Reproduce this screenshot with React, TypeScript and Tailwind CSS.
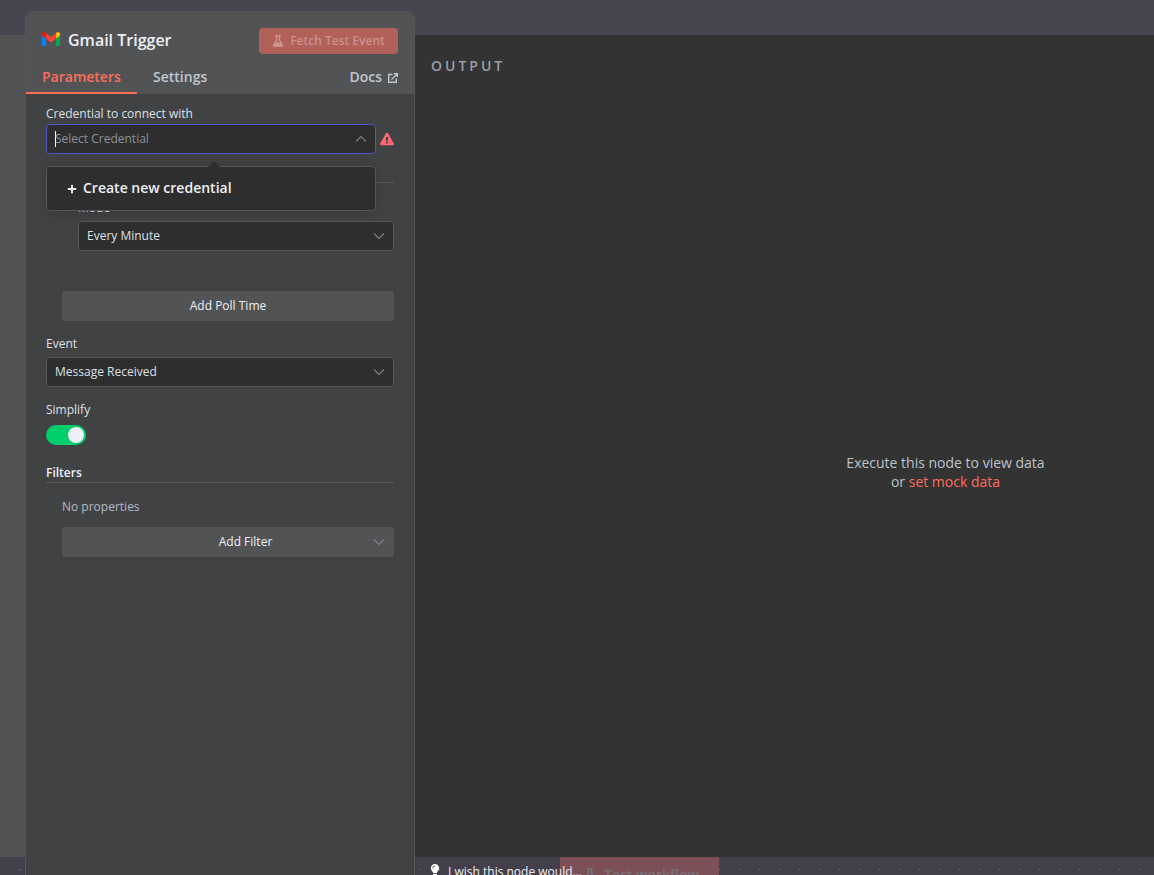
import React from "react";
import { FaFlask, FaExclamationTriangle, FaPlus, FaLightbulb } from "react-icons/fa";

function Chevron({ up = false }: { up?: boolean }) {
  return (
    <svg width="12" height="8" viewBox="0 0 12 8" fill="none" stroke="#7f8187" strokeWidth="1.1" className="shrink-0">
      <path d={up ? "M1 6.5 6 1.5 11 6.5" : "M1 1.5 6 6.5 11 1.5"} />
    </svg>
  );
}

function GmailLogo() {
  return (
    <svg width="18" height="14" viewBox="0 0 88 66" preserveAspectRatio="none" className="mb-0.5 shrink-0">
      <path fill="#0085f7" d="M6 66h14V32L0 17v43c0 3.300 2.700 6 6 6" />
      <path fill="#00a94b" d="M68 66h14c3.300 0 6-2.700 6-6V17L68 32" />
      <path fill="#ffbc00" d="M68 6v26l20-15V9c0-7.400-8.500-11.700-14.400-7.200" />
      <path fill="#ff4131" d="M20 32V6l24 18L68 6v26L44 50" />
      <path fill="#e51c19" d="M0 9v8l20 15V6l-5.600-4.200C8.500-2.700 0 1.600 0 9" />
    </svg>
  );
}

function Select({ value }: { value: string }) {
  return (
    <div className="flex h-[30px] items-center justify-between rounded border border-[#555658] bg-[#2e2e2e] pr-2 pl-2 text-[#dde0e6]">
      <span>{value}</span>
      <Chevron />
    </div>
  );
}

function Dots() {
  return (
    <svg width="100%" height="18" className="block">
      <defs>
        <pattern id="dots" width="20" height="20" patternUnits="userSpaceOnUse" x="4" y="-3">
          <rect x="0" y="15" width="1" height="1" fill="#74737f" />
        </pattern>
      </defs>
      <rect width="100%" height="18" fill="url(#dots)" />
    </svg>
  );
}

export default function App() {
  return (
    <div className="flex h-[875px] w-[1154px] overflow-hidden bg-[#464550] font-['Open_Sans',sans-serif] text-xs">
      <div className="flex w-[25px] shrink-0 flex-col">
        <div className="h-[35px]" />
        <div className="h-[822px] bg-[#525355]" />
        <div className="h-[18px] bg-[#433f4b]">
          <svg width="25" height="18">
            <rect x="19" y="12" width="1" height="1" fill="#8b8994" />
          </svg>
        </div>
      </div>

      <section className="mt-[11px] flex h-[864px] w-[390px] shrink-0 flex-col rounded-t-lg border-x border-[#555658] bg-[#414244]">
        <header className="flex h-[83px] shrink-0 flex-col rounded-t-lg bg-[#525355]">
          <div className="flex h-[57px] items-center pt-px pr-4 pl-4">
            <GmailLogo />
            <h1 className="ml-2 text-base font-semibold text-[#eef0f5]">Gmail Trigger</h1>
            <button className="mt-0.5 ml-auto flex h-[26px] w-[139px] items-center justify-center gap-1.5 rounded bg-[#b1605a] font-semibold text-[#cc918d]">
              <FaFlask size={12} />
              Fetch Test Event
            </button>
          </div>
          <nav className="flex h-[26px] text-sm leading-[17px] font-semibold text-[#c1c6d1]">
            <span className="w-[111px] border-b-2 border-[#ff6d5a] pl-4 text-[#ff6d5a]">Parameters</span>
            <span className="ml-4">Settings</span>
            <span className="mr-4 ml-auto flex h-[17px] items-center gap-1.5">
              Docs
              <svg width="10" height="10" viewBox="0 0 10 10" fill="none" stroke="currentColor" strokeWidth="1.4" className="mt-0.5">
                <path d="M4.500 1.500H.7v7.800h7.600V5.500M3.500 6.500 9 1M6 .7h3.300V4" />
              </svg>
            </span>
          </nav>
        </header>

        <div className="flex flex-col px-5 pt-3 text-[#dde0e6]">
          <label className="h-[18px] leading-4">Credential to connect with</label>
          <div className="flex items-center">
            <div className="relative flex h-[30px] w-[330px] items-center rounded border border-[#5255c4] bg-[#2e2e2e] pr-2 pl-2 text-[#8f929b]">
              <span className="h-4 w-px bg-white" />
              <span className="-ml-px flex-1">Select Credential</span>
              <Chevron up />
              <div className="absolute top-[41px] -left-px z-10 flex h-[45px] w-[330px] items-center rounded border border-[#555658] bg-[#2e2e2e] pb-px pl-5 text-sm font-semibold text-[#eef0f5] shadow-[0_2px_12px_rgba(0,0,0,0.15)]">
                <svg width="14" height="7" viewBox="0 0 14 7" className="absolute -top-[6px] left-[160px]">
                  <path d="M0 7 5.500 1.200Q7 0 8.500 1.200L14 7Z" fill="#2e2e2e" />
                </svg>
                <FaPlus size={10} className="mt-px mr-1.5" />
                Create new credential
              </div>
            </div>
            <FaExclamationTriangle size={14} className="ml-1 text-[#ff6874]" />
          </div>
          <div className="mt-7 h-px bg-[#58595b]" />
          <div className="mt-[17px] ml-8">
            <label className="block h-[21px] leading-4">Mode</label>
            <Select value="Every Minute" />
          </div>
          <button className="mt-10 ml-4 h-[30px] rounded bg-[#525355] text-[#eef0f5]">Add Poll Time</button>
          <label className="mt-[15px] h-[21px] leading-4">Event</label>
          <Select value="Message Received" />
          <label className="mt-[15px] h-[23px] leading-4">Simplify</label>
          <div className="flex h-5 w-10 items-center justify-end rounded-full bg-[#00cd6b] pr-0.5">
            <span className="size-4 rounded-full bg-[#eef0f8]" />
          </div>
          <h2 className="mt-5 h-[18px] border-b border-[#58595b] leading-4 font-semibold text-[#eef0f5]">Filters</h2>
          <p className="mt-4 ml-4 leading-4 text-[#b5b9c4]">No properties</p>
          <button className="mt-3 ml-4 flex h-[30px] items-center rounded bg-[#525355] pr-[9px] pl-14 text-[#eef0f5]">
            <span className="flex-1">Add Filter</span>
            <Chevron />
          </button>
        </div>
      </section>

      <main className="flex min-w-0 flex-1 flex-col">
        <div className="h-[35px] shrink-0" />
        <section className="flex h-[822px] shrink-0 flex-col bg-[#333333]">
          <h2 className="mt-[22px] ml-4 text-sm leading-[18px] font-semibold tracking-[3px] text-[#9a9eaa]">OUTPUT</h2>
          <div className="mt-[378px] ml-[322px] text-center text-sm leading-[19px] text-[#bec3ce]">
            Execute this node to view data
            <br />
            or <span className="text-[#ff6d5a]">set mock data</span>
          </div>
        </section>
        <footer className="relative h-[18px] shrink-0 overflow-hidden bg-[#433f4b]">
          <Dots />
          <div className="absolute top-0 left-[145px] flex h-[50px] w-[159px] items-start gap-2 bg-[#7c5056] pt-[10px] pl-6 text-sm leading-4 font-semibold text-[#77717b]">
            <FaFlask size={12} className="mt-px" />
            Test workflow
          </div>
          <div className="absolute top-[7px] left-4 flex items-start gap-[7px] leading-4 text-[#eef0f5]">
            <FaLightbulb size={12} className="-ml-0.5 text-white" />
            <span>I wish this node would...</span>
          </div>
        </footer>
      </main>
    </div>
  );
}
